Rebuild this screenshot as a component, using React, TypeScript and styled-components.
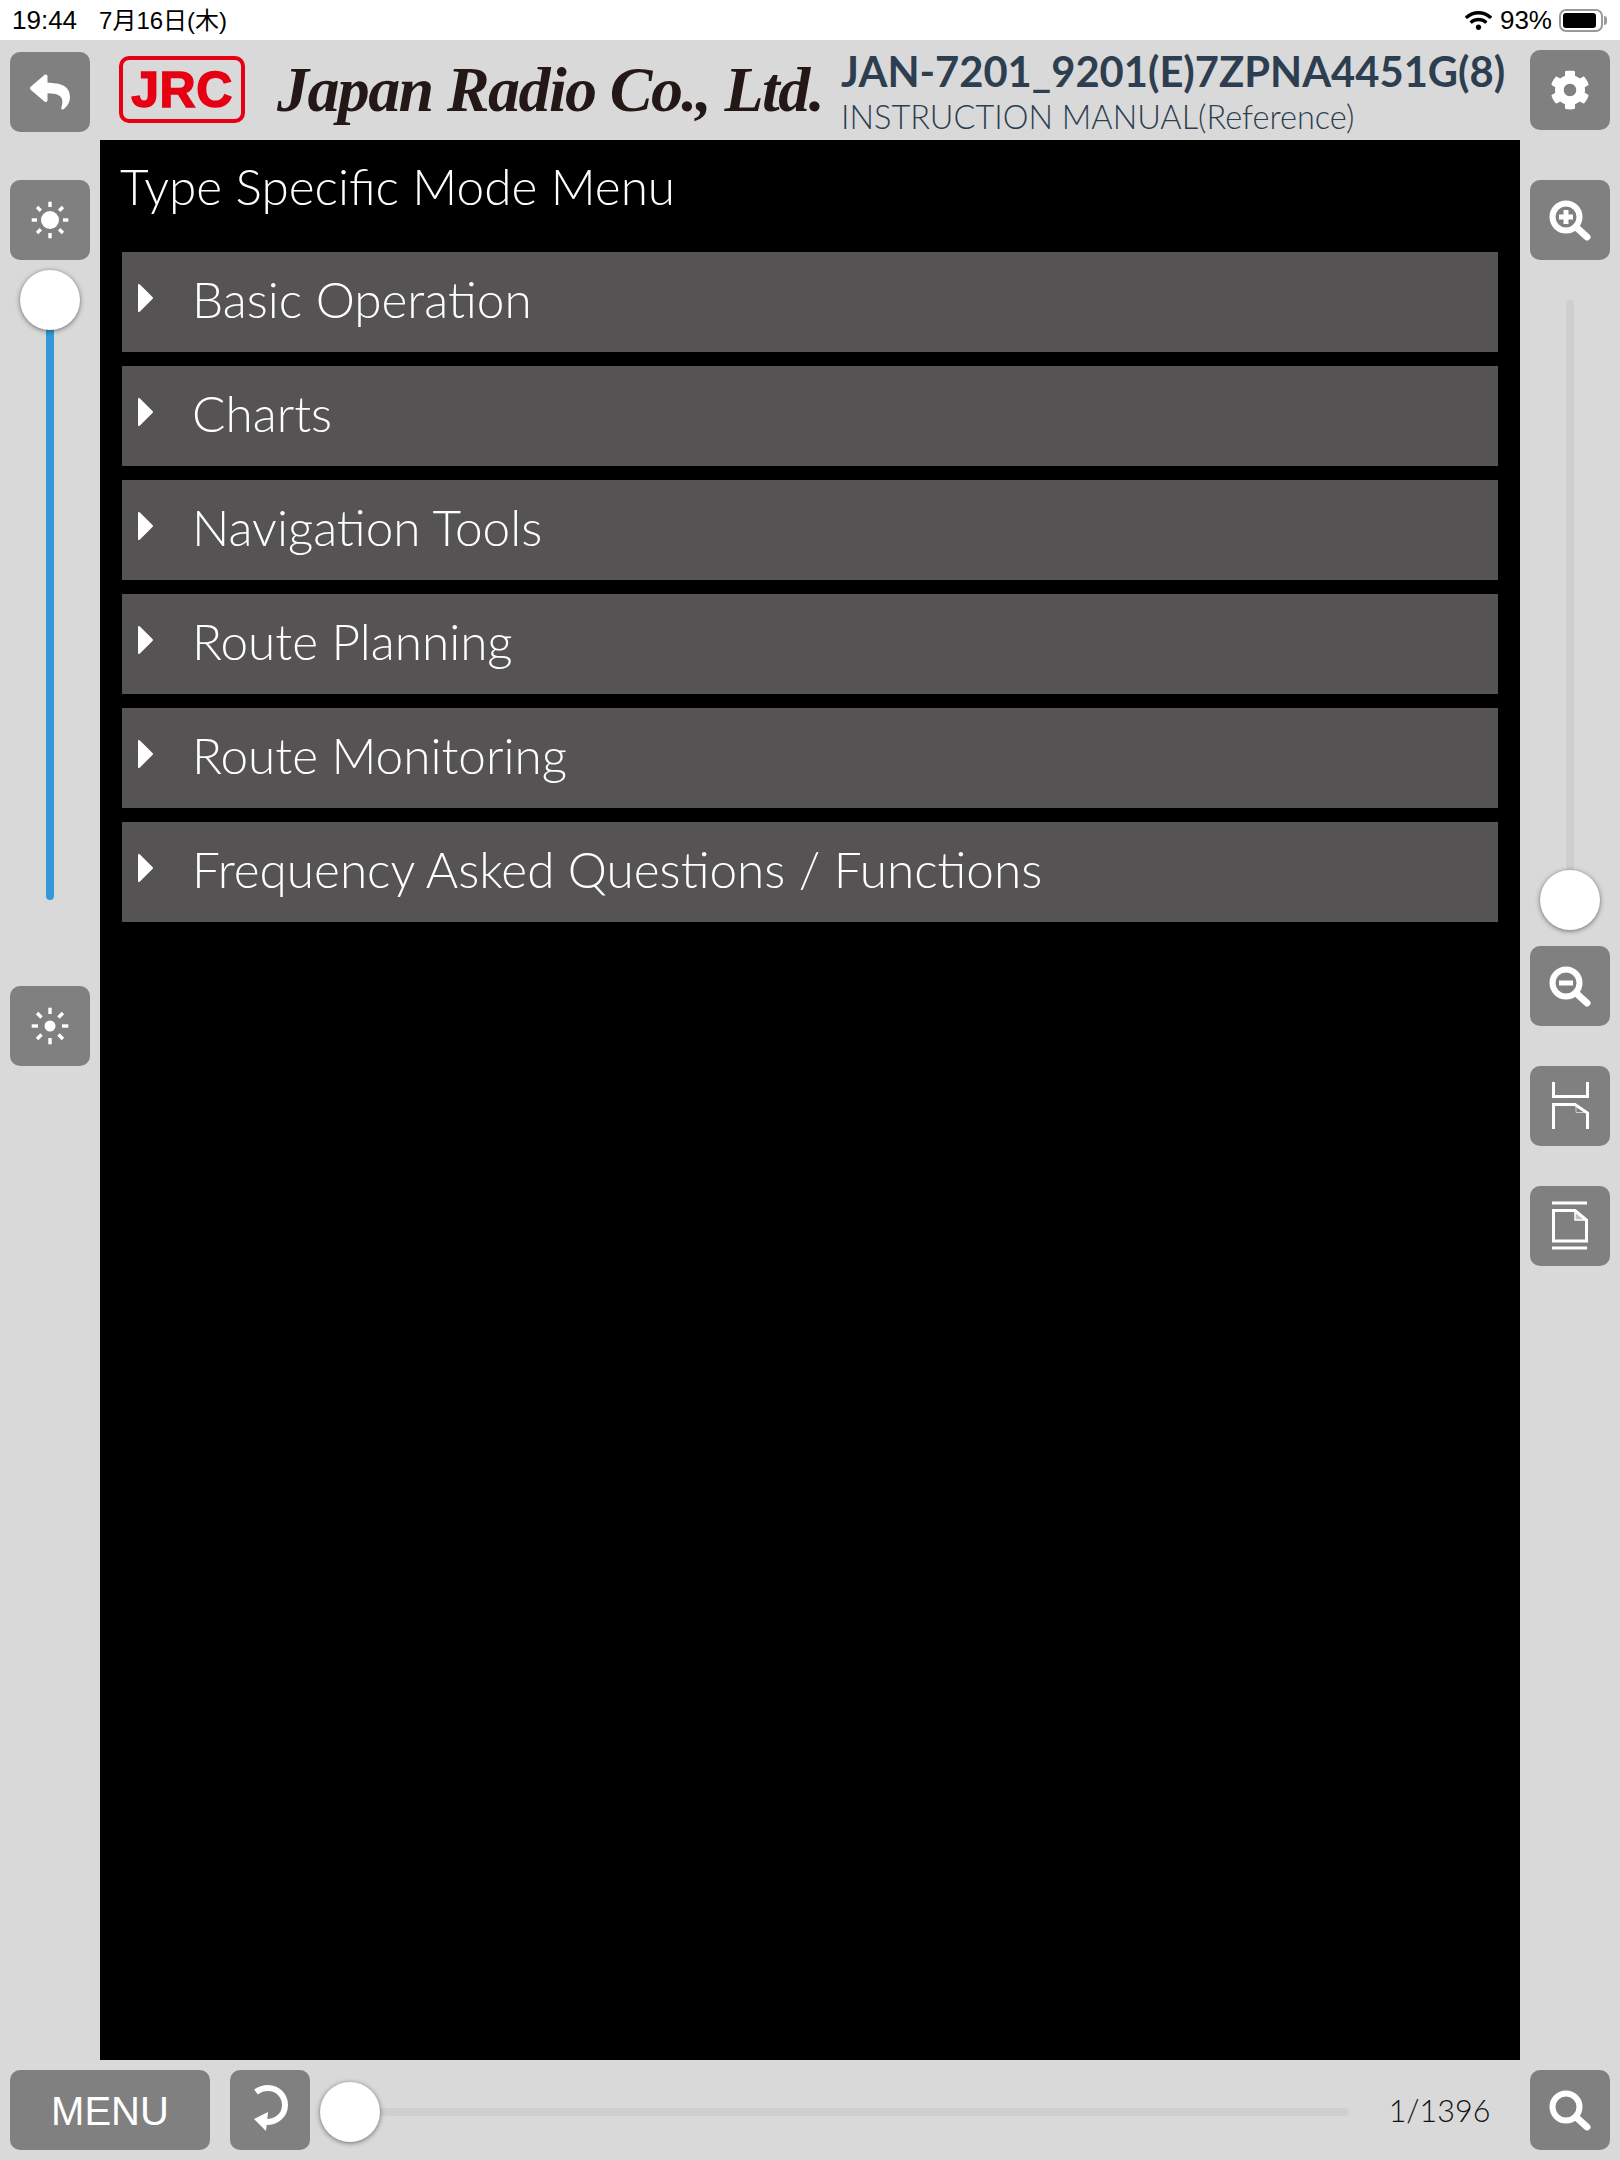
import React from 'react';
import styled, { createGlobalStyle } from 'styled-components';
import { FaReply, FaCog, FaWifi } from 'react-icons/fa';

const GlobalStyle = createGlobalStyle`
  html, body {
    margin: 0;
    padding: 0;
    background: #d9d9d9;
  }
`;

const Page = styled.div`
  width: 1620px;
  height: 2160px;
  display: flex;
  flex-direction: column;
  background: #d9d9d9;
  font-family: 'Lato', 'Liberation Sans', sans-serif;
  overflow: hidden;
`;

// iPad status bar
const StatusBar = styled.div`
  height: 40px;
  background: #fff;
  display: flex;
  align-items: center;
  justify-content: space-between;
  padding: 0 17px 0 12px;
  font-family: 'Liberation Sans', 'Noto Sans CJK JP', sans-serif;
  font-size: 26px;
  color: #000;
`;

const StatusGroup = styled.div<{ $gap: number }>`
  display: flex;
  align-items: center;
  gap: ${(p) => p.$gap}px;
`;

const DateText = styled.span`
  font-size: 24px;
  margin-top: -3px;
`;

const WifiIcon = styled(FaWifi)`
  margin-right: -2px;
`;

const Battery = styled.div`
  width: 44px;
  height: 23px;
  box-sizing: border-box;
  border: 2px solid #9a9a9a;
  border-radius: 7px;
  padding: 2px;
  margin-left: -3px;
  position: relative;

  &::before {
    content: '';
    display: block;
    width: 92%;
    height: 100%;
    background: #000;
    border-radius: 3px;
  }

  &::after {
    content: '';
    position: absolute;
    right: -6px;
    top: 5px;
    width: 3px;
    height: 9px;
    background: #9a9a9a;
    border-radius: 0 3px 3px 0;
  }
`;

const Header = styled.div`
  height: 100px;
  display: flex;
  align-items: center;
  padding: 0 10px;
`;

const IconButton = styled.button<{ $width?: number; $shift?: number }>`
  width: ${(p) => p.$width ?? 80}px;
  height: 80px;
  flex-shrink: 0;
  padding: 0;
  border: none;
  border-radius: 10px;
  background: #808080;
  color: #fff;
  display: flex;
  align-items: center;
  justify-content: center;
  margin-top: ${(p) => p.$shift ?? 0}px;
`;

const MenuButton = styled(IconButton)`
  font-family: 'Liberation Sans', sans-serif;
  font-size: 40px;
  padding-top: 2px;
`;

const JrcBadge = styled.div`
  width: 126px;
  height: 67px;
  margin-left: 29px;
  margin-top: -1px;
  box-sizing: border-box;
  border: 4px solid #e60012;
  border-radius: 10px;
  display: flex;
  align-items: center;
  justify-content: center;
  font-family: 'Liberation Sans', sans-serif;
  font-weight: 700;
  font-size: 50px;
  letter-spacing: 0.5px;
  color: #e60012;
  -webkit-text-stroke: 1.5px #e60012;
`;

const CompanyName = styled.div`
  width: 547px;
  flex-shrink: 0;
  margin-left: 32px;
  font-family: 'Liberation Serif', serif;
  font-weight: 700;
  font-style: italic;
  font-size: 64px;
  letter-spacing: -1.6px;
  white-space: nowrap;
  color: #231815;
`;

const TitleBlock = styled.div`
  flex: 1;
  margin-left: 17px;
  margin-top: 4px;
  display: flex;
  flex-direction: column;
  color: #2c3e50;
  white-space: nowrap;
`;

const DocNumber = styled.div`
  font-weight: 700;
  font-size: 41.7px;
  line-height: 46px;
`;

const DocType = styled.div`
  margin-top: 4px;
  font-weight: 300;
  font-size: 32.5px;
  line-height: 38px;
`;

const Body = styled.div`
  flex: 1;
  display: flex;
  min-height: 0;
`;

const Rail = styled.div`
  width: 100px;
  display: flex;
  flex-direction: column;
  align-items: center;
  padding-top: 40px;
  box-sizing: border-box;
`;

const SliderV = styled.div<{ $height: number; $top: number }>`
  position: relative;
  width: 60px;
  height: ${(p) => p.$height}px;
  margin-top: ${(p) => p.$top}px;
`;

const TrackV = styled.div<{ $color: string; $top: number; $bottom: number }>`
  position: absolute;
  left: 26px;
  width: 8px;
  top: ${(p) => p.$top}px;
  bottom: ${(p) => p.$bottom}px;
  border-radius: 4px;
  background: ${(p) => p.$color};
`;

const Thumb = styled.div<{ $top?: number; $bottom?: number }>`
  position: absolute;
  left: 0;
  ${(p) => (p.$top !== undefined ? `top: ${p.$top}px;` : '')}
  ${(p) => (p.$bottom !== undefined ? `bottom: ${p.$bottom}px;` : '')}
  width: 60px;
  height: 60px;
  border-radius: 50%;
  background: #fff;
  box-shadow: 0 1px 5px rgba(0, 0, 0, 0.5);
`;

const Spaced = styled.div<{ $top?: number; $left?: number }>`
  margin-top: ${(p) => p.$top ?? 0}px;
  margin-left: ${(p) => p.$left ?? 0}px;
`;

const Panel = styled.main`
  width: 1420px;
  background: #000;
  padding: 0 22px;
  box-sizing: border-box;
  display: flex;
  flex-direction: column;
`;

const PanelTitle = styled.h1`
  margin: 0;
  height: 112px;
  margin-left: -2px;
  padding-top: 12px;
  box-sizing: border-box;
  font-weight: 300;
  font-size: 49.5px;
  line-height: 68px;
  color: #fff;
`;

const MenuList = styled.div`
  display: flex;
  flex-direction: column;
  gap: 14px;
`;

const MenuRow = styled.div`
  height: 100px;
  box-sizing: border-box;
  padding: 0 0 6px 15px;
  background: #555354;
  display: flex;
  align-items: center;
  font-weight: 300;
  font-size: 49.5px;
  color: #fff;
`;

const RowArrow = styled.svg`
  width: 18px;
  height: 30px;
  margin-top: -2px;
  margin-right: 37px;
`;

const Footer = styled.div`
  height: 100px;
  display: flex;
  align-items: center;
  padding: 0 10px;
`;

const SliderH = styled.div`
  position: relative;
  width: 1029px;
  height: 60px;
  margin-left: 10px;
  margin-top: 4px;
`;

const TrackH = styled.div`
  position: absolute;
  left: 50px;
  right: 0;
  top: 26px;
  height: 8px;
  border-radius: 4px;
  background: #cfcfcf;
`;

const PageCount = styled.div`
  width: 181px;
  text-align: center;
  box-sizing: border-box;
  font-weight: 300;
  font-size: 30.5px;
  color: #111;
`;

const Glyph = styled.svg`
  width: 80px;
  height: 80px;
  display: block;
`;

const rays = [0, 45, 90, 135, 180, 225, 270, 315];

const Sun = ({ r, from }: { r: number; from: number }) => (
  <Glyph viewBox="0 0 80 80">
    <circle cx="40" cy="40" r={r} fill="#fff" />
    {rays.map((a) => (
      <line key={a} x1="40" y1={40 - from} x2="40" y2="21.7" stroke="#fff" strokeWidth="3.4" transform={`rotate(${a} 40 40)`} />
    ))}
  </Glyph>
);

const Magnifier = ({ sign }: { sign?: 'plus' | 'minus' }) => (
  <Glyph viewBox="0 0 80 80" fill="none" stroke="#fff">
    <circle cx="36" cy="37" r="13.5" strokeWidth="6" />
    <line x1="46" y1="47" x2="57" y2="57" strokeWidth="7" strokeLinecap="round" />
    {sign && <line x1="29" y1="37" x2="43" y2="37" strokeWidth="5" />}
    {sign === 'plus' && <line x1="36" y1="30" x2="36" y2="44" strokeWidth="5" />}
  </Glyph>
);

const FacingPages = () => (
  <Glyph viewBox="0 0 80 80" fill="none" stroke="#fff" strokeWidth="3">
    <path d="M23.5 16V30.5H57.5V16" />
    <path d="M23.5 63V38.5H45L57.5 47V63" />
    <path d="M46 39V46.5H56" strokeWidth="1" strokeOpacity="0.6" />
  </Glyph>
);

const SinglePage = () => (
  <Glyph viewBox="0 0 80 80" fill="none" stroke="#fff" strokeWidth="3">
    <path d="M22 17H57M22 62H57" />
    <path d="M23.5 24.5H45L56.5 34V55H23.5Z" />
    <path d="M45 24.5V34H56.5" fill="#fff" fillOpacity="0.5" strokeWidth="1.5" />
  </Glyph>
);

const Rotate = () => (
  <Glyph viewBox="0 0 80 80" fill="none">
    <path d="M26 22C30 19 34 18 38 18C48 18 55 26 55 35C55 45 47 52 36 52" stroke="#fff" strokeWidth="6" />
    <path d="M24 49L38 42L36 61Z" fill="#fff" />
  </Glyph>
);

const menuItems = [
  'Basic Operation',
  'Charts',
  'Navigation Tools',
  'Route Planning',
  'Route Monitoring',
  'Frequency Asked Questions / Functions',
];

const App: React.FC = () => {
  return (
    <Page>
      <GlobalStyle />
      <StatusBar>
        <StatusGroup $gap={22}>
          <span>19:44</span>
          <DateText>7月16日(木)</DateText>
        </StatusGroup>
        <StatusGroup $gap={10}>
          <WifiIcon size={27} />
          <span>93%</span>
          <Battery />
        </StatusGroup>
      </StatusBar>

      <Header>
        <IconButton $shift={4}>
          <FaReply size={40} />
        </IconButton>
        <JrcBadge>JRC</JrcBadge>
        <CompanyName>Japan Radio Co., Ltd.</CompanyName>
        <TitleBlock>
          <DocNumber>JAN-7201_9201(E)7ZPNA4451G(8)</DocNumber>
          <DocType>INSTRUCTION MANUAL(Reference)</DocType>
        </TitleBlock>
        <IconButton>
          <FaCog size={40} />
        </IconButton>
      </Header>

      <Body>
        <Rail>
          <IconButton>
            <Sun r={9} from={13} />
          </IconButton>
          <SliderV $height={630} $top={10}>
            <TrackV $color="#3498db" $top={30} $bottom={0} />
            <Thumb $top={0} />
          </SliderV>
          <Spaced $top={86}>
            <IconButton>
              <Sun r={5.5} from={12} />
            </IconButton>
          </Spaced>
        </Rail>

        <Panel>
          <PanelTitle>Type Specific Mode Menu</PanelTitle>
          <MenuList>
            {menuItems.map((item) => (
              <MenuRow key={item}>
                <RowArrow viewBox="0 0 18 30">
                  <path d="M2 2L15 15L2 28Z" fill="#fff" stroke="#fff" strokeWidth="2" strokeLinejoin="round" />
                </RowArrow>
                {item}
              </MenuRow>
            ))}
          </MenuList>
        </Panel>

        <Rail>
          <IconButton>
            <Magnifier sign="plus" />
          </IconButton>
          <SliderV $height={630} $top={40}>
            <TrackV $color="#cfcfcf" $top={0} $bottom={30} />
            <Thumb $bottom={0} />
          </SliderV>
          <Spaced $top={16}>
            <IconButton>
              <Magnifier sign="minus" />
            </IconButton>
          </Spaced>
          <Spaced $top={40}>
            <IconButton>
              <FacingPages />
            </IconButton>
          </Spaced>
          <Spaced $top={40}>
            <IconButton>
              <SinglePage />
            </IconButton>
          </Spaced>
        </Rail>
      </Body>

      <Footer>
        <MenuButton $width={200}>MENU</MenuButton>
        <Spaced $left={20}>
          <IconButton>
            <Rotate />
          </IconButton>
        </Spaced>
        <SliderH>
          <TrackH />
          <Thumb $top={0} />
        </SliderH>
        <PageCount>1/1396</PageCount>
        <IconButton>
          <Magnifier />
        </IconButton>
      </Footer>
    </Page>
  );
};

export default App;
